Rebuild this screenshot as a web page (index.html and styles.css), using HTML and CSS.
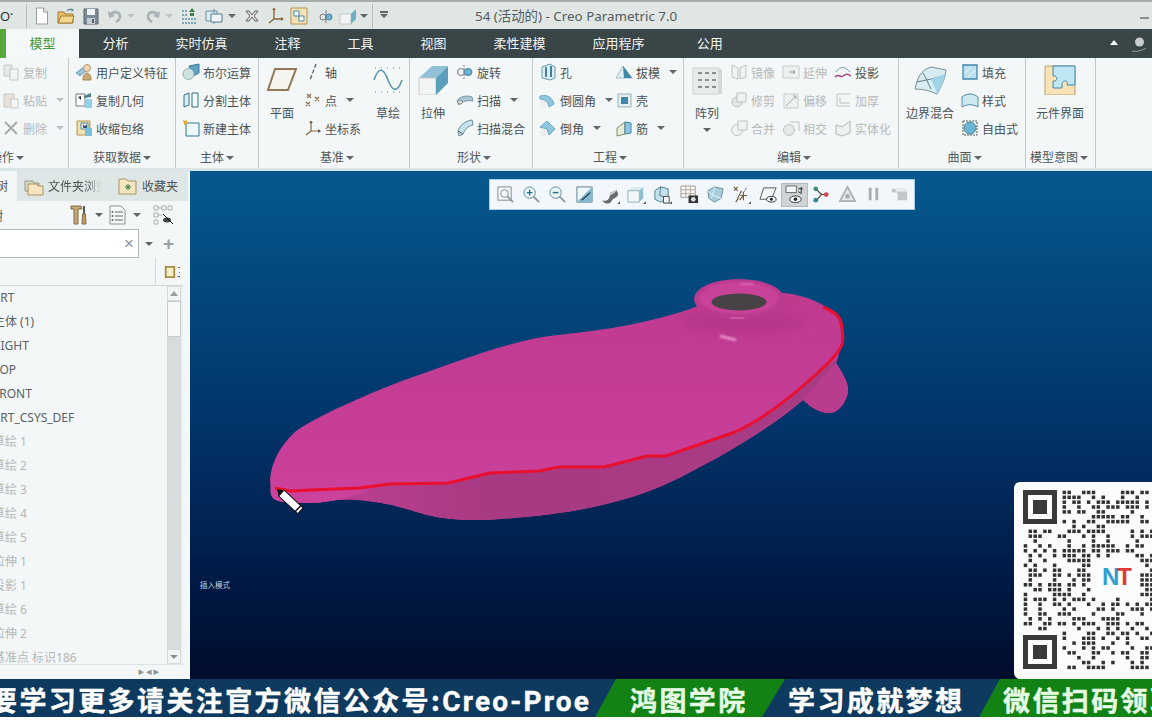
FILE: index.html
```html
<!DOCTYPE html>
<html lang="zh">
<head>
  <meta charset="UTF-8" />
  <title>54 (活动的) - Creo Parametric 7.0</title>
  <link rel="stylesheet" href="styles.css">
</head>
<body>
  <div class="page">

    <!-- quick access + title -->
    <header class="titlebar">
      <span class="logo">O<small>•</small></span>
      <span class="vsep"></span>
      <div class="quick">
        <svg class="q w14" viewBox="0 0 14 18"><path d="M1.5 1h7l4 4v12h-11z" fill="#fff" stroke="#9a9a9a"/><path d="M8.5 1v4h4" fill="#e8e8e8" stroke="#9a9a9a"/></svg>
        <svg class="q w18 m8" viewBox="0 0 18 18"><path d="M1 5h6l1 2h8v9H1z" fill="#e9bf6a" stroke="#a47a30"/><path d="M1 16l3-7h13l-2 7z" fill="#f4d88f" stroke="#a47a30"/><path d="M9 5c1-3 3-4 6-3l-1-1 3 2-3 2 1-2c-2 0-4 0-6 2z" fill="#5d7f94"/></svg>
        <svg class="q w16 m8" viewBox="0 0 16 18"><path d="M1 2h14v15H1z" fill="#7b8a96" stroke="#56626b"/><path d="M4 2h8v6H4z" fill="#eef2f4"/><path d="M4 11h8v6H4z" fill="#c6ced3"/><path d="M9 12h2v4H9z" fill="#56626b"/></svg>
        <svg class="q w16 m8" viewBox="0 0 16 18"><path d="M3 8c3-4 9-4 10 1 0 3-2 5-4 6" fill="none" stroke="#a9b2b5" stroke-width="2.6"/><path d="M1 4l1 7 6-2z" fill="#a9b2b5"/></svg>
        <i class="caret pale m4"></i>
        <svg class="q w16 m10" viewBox="0 0 16 18"><path d="M13 8C10 4 4 4 3 9c0 3 2 5 4 6" fill="none" stroke="#a9b2b5" stroke-width="2.6"/><path d="M15 4l-1 7-6-2z" fill="#a9b2b5"/></svg>
        <i class="caret pale m4"></i>
        <svg class="q w16 m8" viewBox="0 0 16 18"><path d="M1 4h6M1 8h5M1 12h14M1 16h14" stroke="#5b93ad" stroke-width="1.4" stroke-dasharray="2 1"/><path d="M8 5l3-4 3 4zM9 6h4v3H9z" fill="#3e7f4a"/></svg>
        <svg class="q w18 m8" viewBox="0 0 18 18"><path d="M1 4h11v10H1z" fill="#dcebf0" stroke="#6b8e9c"/><path d="M6 7h11v8H6z" fill="#eef6f8" stroke="#4e7c8e"/><path d="M9 2v4M9 15v2" stroke="#6b8e9c"/></svg>
        <i class="caret m5"></i>
        <svg class="q w14 m9" viewBox="0 0 14 18"><path d="M1 4h3l3 4 3-4h3l-4 5 4 5h-3l-3-4-3 4H1l4-5z" fill="#eee" stroke="#555"/></svg>
        <svg class="q w16 m9" viewBox="0 0 16 18"><path d="M6 1v11M6 12l-5 4M6 12h9" fill="none" stroke="#8a6a3a" stroke-width="1.4"/><path d="M13 10l3 2-3 2zM4 3l2-2 2 2z" fill="#8a6a3a"/></svg>
        <svg class="q w18 m6" viewBox="0 0 18 18"><path d="M1 1h16v16H1z" fill="#f4e2b8" stroke="#b49348"/><path d="M4 4h5v5H4zM9 9h5v5H9z" fill="#fff" stroke="#3f87a8"/></svg>
        <svg class="q w14 m11" viewBox="0 0 14 18"><circle cx="4" cy="10" r="3" fill="none" stroke="#777"/><circle cx="10" cy="10" r="3" fill="#6cb4d4" stroke="#3f87a8"/><path d="M7 3v13" stroke="#777"/></svg>
        <svg class="q w18 m6" viewBox="0 0 18 18"><path d="M1 7l6-5h10l-5 5z" fill="#dfeaec"/><path d="M1 7h11v10H1z" fill="#f2f5f5" stroke="#c0c8c8"/><path d="M12 7l5-5v10l-5 5z" fill="#6fb1c4"/></svg>
        <i class="caret m3"></i>
        <span class="vsep m4"></span>
        <i class="caret bar m7"></i>
      </div>
      <div class="title">54 (活动的) - Creo Parametric 7.0</div>
      <span class="minimize"></span>
    </header>

    <!-- ribbon tabs -->
    <nav class="tabs">
      <span class="tab active">模型</span>
      <span class="tab">分析</span>
      <span class="tab">实时仿真</span>
      <span class="tab">注释</span>
      <span class="tab">工具</span>
      <span class="tab">视图</span>
      <span class="tab">柔性建模</span>
      <span class="tab">应用程序</span>
      <span class="tab tab-last">公用</span>
      <span class="tab-tools">
        <i class="caret up"></i>
        <svg class="user" viewBox="0 0 16 18"><circle cx="8.500" cy="6" r="4.500" fill="#c8cccc"/><path d="M1 15c4 1 9 0 14-3" fill="none" stroke="#9aa0a0"/></svg>
      </span>
    </nav>

    <!-- ribbon -->
    <section class="ribbon">
      <div class="group g-ops">
        <div class="g-body">
          <div class="col">
            <div class="item dis"><svg viewBox="0 0 18 18"><path d="M2 2h8v11H2z" fill="#e6e9e9" stroke="#c4c8c8"/><path d="M8 6h8v11H8z" fill="#f4f5f5" stroke="#c4c8c8"/></svg>复制</div>
            <div class="item dis"><svg viewBox="0 0 18 18"><path d="M2 3h10v13H2z" fill="#e6e2d8" stroke="#c8c6c0"/><path d="M9 8h7v9H9z" fill="#f4f5f5" stroke="#c4c8c8"/></svg>粘贴<i class="caret pale"></i></div>
            <div class="item dis"><svg viewBox="0 0 18 18"><path d="M3 3l12 12M15 3L3 15" stroke="#a8acac" stroke-width="2.200"/></svg>删除<i class="caret pale"></i></div>
          </div>
        </div>
        <div class="g-label clip-left">操作<i class="caret"></i></div>
      </div>

      <div class="group g-get">
        <div class="g-body">
          <div class="col">
            <div class="item"><svg viewBox="0 0 18 18"><path d="M1 10l8-6 3 3-7 6z" fill="#9cc6d8" stroke="#6d9db3"/><circle cx="12" cy="5" r="3.500" fill="#f0d8b8" stroke="#b49a70"/><path d="M8 17c0-5 2-7 4-7s4 2 4 7z" fill="#cca873" stroke="#a58550"/></svg>用户定义特征</div>
            <div class="item"><svg viewBox="0 0 18 18"><path d="M1 3h9v12H1z" fill="#fff" stroke="#777"/><path d="M3 6l3 3V5z" fill="#333"/><path d="M9 5l7-3v4l-7 1z" fill="#4a7f93"/><path d="M10 8h7v9h-7z" fill="#8fd0ea"/></svg>复制几何</div>
            <div class="item"><svg viewBox="0 0 18 18"><path d="M2 2h13v14H2z" fill="#f2e0ae" stroke="#b39448"/><path d="M6 4h7v6H6z" fill="#fff" stroke="#3f87a8"/><path d="M10 9h7v8h-7z" fill="#77bfdc"/><path d="M8 5l2 2 2-2v4H8z" fill="#2f5d72"/></svg>收缩包络</div>
          </div>
        </div>
        <div class="g-label">获取数据<i class="caret"></i></div>
      </div>

      <div class="group g-body-grp">
        <div class="g-body">
          <div class="col">
            <div class="item"><svg viewBox="0 0 18 18"><path d="M7 3l10-2v9l-6 3z" fill="#5ea2bd" stroke="#3f7f98"/><circle cx="6.500" cy="11" r="5.500" fill="#cfe2e2" stroke="#8fb0b0"/></svg>布尔运算</div>
            <div class="item"><svg viewBox="0 0 18 18"><path d="M2 4l5-2v12l-5 2z" fill="#d6edf6" stroke="#386e85"/><path d="M10 2h6v14h-6z" fill="#eef8fb" stroke="#386e85"/></svg>分割主体</div>
            <div class="item"><svg viewBox="0 0 18 18"><path d="M4 4h13v13H4z" fill="#eef8fb" stroke="#2f7b99"/><path d="M1 1l2 1 2-1 0 2 1 2-2 0-2 1 0-2-1-2z" fill="#e6a92a"/></svg>新建主体</div>
          </div>
        </div>
        <div class="g-label">主体<i class="caret"></i></div>
      </div>

      <div class="group g-datum">
        <div class="g-body">
          <div class="big b30">
            <svg class="big-ic" viewBox="0 0 30 30"><path d="M8 4h21l-8 21H1z" fill="#f6f4ee" stroke="#93785a" stroke-width="2"/></svg>
            <span>平面</span>
          </div>
          <div class="col c-datum">
            <div class="item"><svg viewBox="0 0 18 18"><path d="M12 1L6 17" stroke="#555" stroke-dasharray="4 2" stroke-width="1.200"/></svg>轴</div>
            <div class="item"><svg viewBox="0 0 18 18"><path d="M3 3l4 4M7 3L3 7M11 6l4 4M15 6l-4 4M2 11l4 4M6 11l-4 4" stroke="#8d6a3f" stroke-width="1.200"/></svg>点<i class="caret"></i></div>
            <div class="item"><svg viewBox="0 0 18 18"><path d="M7 2v10M7 12l-5 4M7 12h9" fill="none" stroke="#8a6a3a" stroke-width="1.200"/><path d="M14 10l3 2-3 2zM5 4l2-2 2 2z" fill="#555"/></svg>坐标系</div>
          </div>
          <div class="big b36">
            <svg class="big-ic" viewBox="0 0 30 30"><path d="M1 15C6 0 11 4 15 15s9 14 14 0" fill="none" stroke="#5c97ad" stroke-width="1.600"/><path d="M2 3h27M2 27h27" stroke="#777" stroke-dasharray="1 5"/></svg>
            <span>草绘</span>
          </div>
        </div>
        <div class="g-label">基准<i class="caret"></i></div>
      </div>

      <div class="group g-shape">
        <div class="g-body">
          <div class="big b30">
            <svg class="big-ic" viewBox="0 0 30 30"><path d="M1 13L14 1h16L18 13z" fill="#8fc0d6"/><path d="M1 13h17v17H1z" fill="#f2f4f4" stroke="#c8cccc"/><path d="M18 13L30 1v17L18 30z" fill="#5b9ebb"/></svg>
            <span>拉伸</span>
          </div>
          <div class="col">
            <div class="item"><svg viewBox="0 0 18 18"><circle cx="5" cy="9" r="3.500" fill="none" stroke="#777"/><ellipse cx="12" cy="9" rx="4" ry="3.500" fill="#6cb4d4" stroke="#3f87a8"/><path d="M8 2v14" stroke="#888" stroke-dasharray="2 1"/></svg>旋转</div>
            <div class="item"><svg viewBox="0 0 18 18"><path d="M1 10c3-5 10-6 15-4l1 4c-5-1-11 0-14 4z" fill="#a9c6d2" stroke="#7a98a6"/><ellipse cx="4" cy="11" rx="2.500" ry="2" fill="#ddd" stroke="#888"/></svg>扫描<i class="caret"></i></div>
            <div class="item"><svg viewBox="0 0 18 18"><path d="M2 12C4 6 9 2 16 1l1 5c-5 1-8 4-10 9l-4 2z" fill="#c6e2ec" stroke="#6b8e9c"/><path d="M2 12l5 3" stroke="#555"/></svg>扫描混合</div>
          </div>
        </div>
        <div class="g-label">形状<i class="caret"></i></div>
      </div>

      <div class="group g-eng">
        <div class="g-body">
          <div class="col c-eng">
            <div class="item"><svg viewBox="0 0 18 18"><path d="M3 4l8-3 5 3v11l-5 2-8-2z" fill="#dceef4" stroke="#6b98aa"/><path d="M7 4v10M12 3v11" stroke="#42829c" stroke-width="2"/></svg>孔</div>
            <div class="item"><svg viewBox="0 0 18 18"><path d="M1 8h6v9H1z" fill="#eee"/><path d="M1 5c7-2 12 1 14 8l-5 3C9 11 6 8 1 8z" fill="#8cc7df" stroke="#6da8c0"/></svg>倒圆角<i class="caret"></i></div>
            <div class="item"><svg viewBox="0 0 18 18"><path d="M1 9h7v8H1z" fill="#eee"/><path d="M1 8l7-6 8 8-6 6-2-6z" fill="#8cc7df" stroke="#6da8c0"/></svg>倒角<i class="caret"></i></div>
          </div>
          <div class="col">
            <div class="item"><svg viewBox="0 0 18 18"><path d="M1 15L8 3l9 12z" fill="#e0edf1" stroke="#a9bcc4"/><path d="M8 3l9 12H9z" fill="#3f87a8"/></svg>拔模<i class="caret"></i></div>
            <div class="item"><svg viewBox="0 0 18 18"><path d="M3 3h13v13H3z" fill="#e6eef0" stroke="#9ab0b8"/><path d="M6 6h7v7H6z" fill="#3f87a8"/></svg>壳</div>
            <div class="item"><svg viewBox="0 0 18 18"><path d="M2 9l8-6v12l-8 2z" fill="#e4ecd8" stroke="#7d8f68"/><path d="M10 3l6 1v10l-6 1z" fill="#8cc7df" stroke="#3f87a8"/></svg>筋<i class="caret"></i></div>
          </div>
        </div>
        <div class="g-label">工程<i class="caret"></i></div>
      </div>

      <div class="group g-edit">
        <div class="g-body">
          <div class="big b30">
            <svg class="big-ic" viewBox="0 0 30 30"><path d="M1 3h26v26H1z" fill="#e8ebeb" stroke="#cdd2d2"/><path d="M27 3l3 2v24h-3z" fill="#d4d8d8"/><path d="M6 8h4M13 8h4M20 8h4M6 15h4M13 15h4M20 15h4M6 22h4M13 22h4M20 22h4" stroke="#8a9090" stroke-width="2"/></svg>
            <span class="pile">阵列<i class="caret"></i></span>
          </div>
          <div class="col c-edit">
            <div class="item dis"><svg viewBox="0 0 18 18"><path d="M2 2l6 3v11l-6-2zM16 2l-6 3v11l6-2z" fill="#f0f3f3" stroke="#bcc2c2"/></svg>镜像</div>
            <div class="item dis"><svg viewBox="0 0 18 18"><circle cx="7" cy="11" r="5" fill="#e2e6e6" stroke="#bcc2c2"/><path d="M7 2h9v9H7z" fill="#f0f3f3" stroke="#bcc2c2"/></svg>修剪</div>
            <div class="item dis"><svg viewBox="0 0 18 18"><circle cx="7" cy="11" r="5.500" fill="#f0f3f3" stroke="#bcc2c2"/><path d="M8 2h9v9H8z" fill="#f0f3f3" stroke="#bcc2c2"/></svg>合并</div>
          </div>
          <div class="col c-edit">
            <div class="item dis"><svg viewBox="0 0 18 18"><path d="M1 3h16v12H1z" fill="#eef1f1" stroke="#c8cccc"/><path d="M7 9h6M11 7l2 2-2 2" fill="none" stroke="#8a9090"/></svg>延伸</div>
            <div class="item dis"><svg viewBox="0 0 18 18"><path d="M2 3h14v14H2z" fill="#eef1f1" stroke="#c8cccc"/><path d="M4 15L14 5M11 5h3v3" fill="none" stroke="#a4aaaa"/></svg>偏移</div>
            <div class="item dis"><svg viewBox="0 0 18 18"><circle cx="7" cy="11" r="5.500" fill="#e6e9e9" stroke="#bcc2c2"/><path d="M8 3h9v9" fill="none" stroke="#bcc2c2"/></svg>相交</div>
          </div>
          <div class="col">
            <div class="item"><svg viewBox="0 0 18 18"><path d="M2 9c4-6 9-6 14 0" fill="none" stroke="#6ca5bd"/><path d="M1 14c3-4 5 1 8-1s4-3 8 0" fill="none" stroke="#a03a7a" stroke-width="1.400"/></svg>投影</div>
            <div class="item dis"><svg viewBox="0 0 18 18"><path d="M3 3h13M3 3v12h13M6 6v6h10" fill="none" stroke="#bcc2c2"/></svg>加厚</div>
            <div class="item dis"><svg viewBox="0 0 18 18"><path d="M2 6l6 2 8-6v12l-8 3-6-2z" fill="#eef1f1" stroke="#b0b6b6"/></svg>实体化</div>
          </div>
        </div>
        <div class="g-label">编辑<i class="caret"></i></div>
      </div>

      <div class="group g-surf">
        <div class="g-body">
          <div class="big b48">
            <svg class="big-ic" viewBox="0 0 36 30"><path d="M3 24C5 13 9 5 19 2l15 3c-1 9-5 17-9 24-6-3-14-5-22-5z" fill="#d8edf2" stroke="#7a9098"/><path d="M11 8c3 5 5 10 8 16M5 17c8-2 18-3 28-7" fill="none" stroke="#5e7c86"/><path d="M19 14l14-5c-1 7-4 14-8 19z" fill="#9fd4e6"/></svg>
            <span>边界混合</span>
          </div>
          <div class="col">
            <div class="item"><svg viewBox="0 0 18 18"><path d="M2 2h14v14H2z" fill="#bce0ef" stroke="#3f87a8" stroke-width="1.300"/><path d="M4 10l6-6M7 14l7-7" stroke="#fff"/></svg>填充</div>
            <div class="item"><svg viewBox="0 0 18 18"><path d="M1 16V6c5-4 11-4 16 0v10c-5-3-11-3-16 0z" fill="#cfe9f3" stroke="#4e8ca6"/></svg>样式</div>
            <div class="item"><svg viewBox="0 0 18 18"><path d="M2 2h14v14H2z" fill="none" stroke="#555" stroke-dasharray="2 1"/><circle cx="9" cy="9" r="6" fill="#6cb4d4" stroke="#3f87a8"/></svg>自由式</div>
          </div>
        </div>
        <div class="g-label">曲面<i class="caret"></i></div>
      </div>

      <div class="group g-intent">
        <div class="g-body">
          <div class="big b48">
            <svg class="big-ic" viewBox="0 0 32 30"><path d="M1 1h30v29H1z" fill="#f8e2b6" stroke="#b9a273"/><path d="M9 1h22v19h-8c2-5-5-6-5 0v3H9v-7c5 1 5-6 0-5z" fill="#bfe6f3" stroke="#3f87a8"/></svg>
            <span>元件界面</span>
          </div>
        </div>
        <div class="g-label">模型意图<i class="caret"></i></div>
      </div>
    </section>

    <main class="workspace">
      <!-- model tree, cut by the left edge of the capture -->
      <aside class="sidebar">
        <div class="side-tabs">
          <span class="side-tab on">树</span>
          <span class="side-tab t-files">
            <svg viewBox="0 0 20 20"><path d="M1 5h8l1 2h5v8H1z" fill="#d6d8ce" stroke="#9a9a88"/><path d="M4 8h9l1 2h5v9H4z" fill="#f5e4bd" stroke="#a89360"/></svg><span class="fade">文件夹浏览</span>
          </span>
          <span class="side-tab t-fav">
            <svg viewBox="0 0 20 20"><path d="M1 3h7l2 2h8v13H1z" fill="#f6e6c0" stroke="#a89360"/><path d="M7 11h6M10 8v6M8 9l4 4M12 9l-4 4" stroke="#3f7f4a"/></svg>收藏夹
          </span>
        </div>
        <div class="side-tools">
          <span class="clip-name">树</span>
          <svg class="st-hammer" viewBox="0 0 18 20"><path d="M1 1h10l1 3H8v15H4V4H1z" fill="#c9a873" stroke="#7f6a48"/><path d="M14 1v8" stroke="#555" stroke-width="2"/><path d="M12.500 9h3l.5 10h-4z" fill="#c79a5c" stroke="#7f6a48"/></svg>
          <i class="caret"></i>
          <svg class="st-list" viewBox="0 0 17 20"><path d="M1 1h11l4 4v14H1z" fill="#f6f8f8" stroke="#8a9292"/><path d="M6 7h8M6 11h8M6 15h8" stroke="#5a6868"/><circle cx="3.500" cy="7" r="1" fill="#5a6868"/><circle cx="3.500" cy="11" r="1" fill="#5a6868"/><circle cx="3.500" cy="15" r="1" fill="#5a6868"/></svg>
          <i class="caret"></i>
          <svg class="st-eye" viewBox="0 0 20 20"><path d="M1 1h4v4H1zM1 8h4v4H1zM1 15h4v4H1zM5 3h4M5 10h4M9 1h4v4H9zM15 1h4v4h-4z" fill="#f6f8f8" stroke="#a9b0b0"/><ellipse cx="14" cy="15" rx="4" ry="2.500" fill="#444"/><path d="M10 9l10 10" stroke="#111"/></svg>
        </div>
        <div class="side-search">
          <div class="search-box"><span class="x">×</span></div>
          <i class="caret"></i>
          <span class="plus">+</span>
        </div>
        <div class="side-head">
          <span class="head-sep"></span>
          <svg viewBox="0 0 14 16"><path d="M2 2h10v12H2z" fill="#f6edc9" stroke="#a08a40" stroke-width="2"/></svg>
          <span class="head-more">三</span>
        </div>
        <div class="side-list">
          <ul class="tree">
            <li>PRT</li>
            <li>主体 (1)</li>
            <li>RIGHT</li>
            <li>TOP</li>
            <li>FRONT</li>
            <li>PRT_CSYS_DEF</li>
            <li class="off">草绘 1</li>
            <li class="off">草绘 2</li>
            <li class="off">草绘 3</li>
            <li class="off">草绘 4</li>
            <li class="off">草绘 5</li>
            <li class="off">拉伸 1</li>
            <li class="off">投影 1</li>
            <li class="off">草绘 6</li>
            <li class="off">拉伸 2</li>
            <li class="off">基准点 标识186</li>
          </ul>
          <div class="scrollbar">
            <span class="sb-btn"><i class="caret up"></i></span>
            <span class="sb-thumb"></span>
            <span class="sb-track"></span>
            <span class="sb-btn"><i class="caret"></i></span>
          </div>
        </div>
        <div class="side-foot"><span>▸</span><span>◂</span><span>▸</span></div>
      </aside>

      <div class="viewport">
        <svg class="scene" viewBox="190 171 962 508">
          <defs>
            <linearGradient id="bodyFill" x1="0" y1="0" x2="0" y2="1">
              <stop offset="0" stop-color="#bd3a8e"/>
              <stop offset=".7" stop-color="#c83e98"/>
              <stop offset="1" stop-color="#cf449c"/>
            </linearGradient>
            <linearGradient id="underFill" x1="0" y1="0" x2="1" y2="0">
              <stop offset="0" stop-color="#c6409a"/>
              <stop offset=".35" stop-color="#a83a82"/>
              <stop offset="1" stop-color="#a83c84"/>
            </linearGradient>
            <filter id="soft" x="-30%" y="-30%" width="160%" height="160%"><feGaussianBlur stdDeviation="4"/></filter>
            <filter id="softer" x="-30%" y="-60%" width="160%" height="220%"><feGaussianBlur stdDeviation="1"/></filter>
            <clipPath id="bodyClip"><path d="M270 480 C271 462 281 445 294 433 S370 392 413 377 S510 340 558 335 S650 323 693 308 C710 300 765 295 784 293 C805 295 830 305 838 318 C843 330 843 345 836 363 C842 372 848 382 848 390 S840 413 830 413 S812 408 803 400 C770 428 730 452 681 477 S575 514 500 519 S420 508 375 502 S340 503 302 503 S272 495 270 480 Z"/></clipPath>
          </defs>
          <g clip-path="url(#bodyClip)">
            <rect x="260" y="270" width="600" height="260" fill="url(#bodyFill)"/>
            <path d="M270 492 L291 491 L310 490 L359 488 L390 484 L448 483 L490 473 L539 471 L559 467 L604 467 L647 456 L666 456 L735 432 C770 416 805 385 826 365 L880 340 L880 530 L270 530 Z" fill="url(#underFill)"/>
            <path d="M803 400 C815 386 826 374 836 363 L850 365 L850 420 L805 420 Z" fill="#b83d8e"/>
            <path d="M270 490 L370 490 L310 510 L270 505 Z" fill="#cb429c" filter="url(#softer)"/>
            <ellipse cx="742" cy="322" rx="62" ry="13" fill="#b23688" opacity=".6" filter="url(#soft)"/>
          </g>
          <ellipse cx="739" cy="299" rx="45" ry="20" fill="#b93a8e"/>
          <ellipse cx="739" cy="298" rx="40" ry="16" fill="#c9439a" filter="url(#softer)"/>
          <ellipse cx="739" cy="302" rx="27.500" ry="8.500" fill="#474245"/>
          <path d="M730 317.500 Q736 319 744 317.500" stroke="#ea7fc2" stroke-width="1.500" fill="none" filter="url(#softer)"/>
          <path d="M720 336 Q728 338 736 340" stroke="#ee9ad0" stroke-width="2.500" fill="none" filter="url(#softer)"/>
          <path d="M740 284 Q747 283 754 285" stroke="#de6cb4" stroke-width="1.500" fill="none" filter="url(#softer)"/>
          <path d="M275 488 L291 491 L310 490 L359 488 L390 484 L448 483 L490 473 L539 471 L559 467 L604 467 L647 456 L666 456 L735 432 C770 416 805 385 826 365 S843 340 842 328 S835 312 823 307" fill="none" stroke="#ea0f2e" stroke-width="3" stroke-linejoin="round"/>
          <g transform="translate(277 489) rotate(43)">
            <path d="M0 0 L6 -4 L6 4 Z" fill="#111"/>
            <rect x="6" y="-4" width="26" height="8" fill="#fff" stroke="#111"/>
            <rect x="28" y="-4" width="1.500" height="8" fill="#111"/>
          </g>
        </svg>
        <div class="view-bar">
          <span class="vb"><svg viewBox="0 0 20 20"><path d="M2 2h14v14H2z" fill="#f4f7f8" stroke="#7d8c92"/><circle cx="9" cy="9" r="4" fill="none" stroke="#7d8c92"/><path d="M12 12l6 6" stroke="#8a9a9f" stroke-width="2"/></svg></span>
          <span class="vb"><svg viewBox="0 0 20 20"><circle cx="8" cy="8" r="6" fill="#eaf5f8" stroke="#5e8a99"/><path d="M5 8h6M8 5v6" stroke="#2b6f88" stroke-width="1.500"/><path d="M12 12l6 6" stroke="#8a9a9f" stroke-width="2"/></svg></span>
          <span class="vb"><svg viewBox="0 0 20 20"><circle cx="8" cy="8" r="6" fill="#eaf5f8" stroke="#5e8a99"/><path d="M5 8h6" stroke="#2b6f88" stroke-width="1.500"/><path d="M12 12l6 6" stroke="#8a9a9f" stroke-width="2"/></svg></span>
          <span class="vb"><svg viewBox="0 0 20 20"><path d="M2 2h16v16H2z" fill="#eef6f9" stroke="#5d7f8c"/><path d="M2 18L18 2v16z" fill="#83bad0"/><path d="M7 16l9-8" stroke="#22333a" stroke-width="1.200"/></svg></span>
          <span class="vb"><svg viewBox="0 0 20 20"><path d="M1 16c4 2 8-1 8-4s6-2 7-7l2 4c0 5-5 4-7 8s-7 3-10-1z" fill="#6b6b6b"/><path d="M9 8c2-1 4-1 7-3-1 3-4 4-6 6z" fill="#c9c9c9"/><path d="M20 17v3h-3z" fill="#555"/></svg></span>
          <span class="vb"><svg viewBox="0 0 20 20"><path d="M1 6l4-4h12l-4 4z" fill="#dcebf0"/><path d="M1 6h12v12H1z" fill="#f4f7f8" stroke="#8fb0bc"/><path d="M13 6l4-4v12l-4 4z" fill="#8fbfd2"/><path d="M20 17v3h-3z" fill="#555"/></svg></span>
          <span class="vb"><svg viewBox="0 0 20 20"><path d="M2 6l6-4 8 2v10l-8 4-6-3z" fill="#c6e2ec" stroke="#4e7c8e"/><path d="M8 2l-1 9 9 3" fill="none" stroke="#4e7c8e"/><path d="M11 12h6v7h-6z" fill="#f4f7f8" stroke="#444"/><path d="M20 17v3h-3z" fill="#555"/></svg></span>
          <span class="vb"><svg viewBox="0 0 20 20"><path d="M1 1h15v12H1z" fill="#f4f7f8" stroke="#a89a88"/><path d="M1 5h15M1 9h15M6 1v12M11 1v12" stroke="#b8a898"/><path d="M9 11h10v8H9z" fill="#333"/><circle cx="14" cy="15" r="2.500" fill="#ddd"/></svg></span>
          <span class="vb"><svg viewBox="0 0 20 20"><path d="M2 6l7-4 9 2-2 10-7 4-6-4z" fill="#a9cdd8" stroke="#6d919e"/><path d="M9 2L7 11l9 3M2 6l5 5-2 3" fill="none" stroke="#e6f3f6"/></svg></span>
          <span class="vb"><svg viewBox="0 0 20 20"><path d="M2 2l4 4M6 2L2 6M6 14l4-8M4 18l3-5M9 11h7M12 7v9M12 11l-4 5" stroke="#6e5a3e" stroke-width="1.200" fill="none"/><path d="M15 3l-2 4" stroke="#555" stroke-dasharray="2 1"/><path d="M20 17v3h-3z" fill="#555"/></svg></span>
          <span class="vb"><svg viewBox="0 0 20 20"><path d="M5 3h13l-5 12H1z" fill="#f4f7f8" stroke="#555"/><ellipse cx="13" cy="15" rx="5" ry="3" fill="#f4f7f8" stroke="#333"/><circle cx="13" cy="15" r="1.500" fill="#222"/></svg></span>
          <span class="vb vb-on"><svg viewBox="0 0 20 20"><path d="M1 1h11v7H1z" fill="#f4f7f8" stroke="#666"/><path d="M14 4h5M17 2v7l-3-2" fill="none" stroke="#333"/><ellipse cx="11" cy="15" rx="6" ry="3.500" fill="#f4f7f8" stroke="#333"/><circle cx="11" cy="15" r="1.800" fill="#222"/></svg></span>
          <span class="vb"><svg viewBox="0 0 20 20"><path d="M6 5l5 5-5 6M11 10h6" fill="none" stroke="#444" stroke-width="1.200"/><circle cx="5" cy="4" r="2.500" fill="#3f8f6a"/><circle cx="16" cy="10" r="2.500" fill="#d0484c"/><circle cx="5" cy="16" r="2.500" fill="#3f7f9a"/></svg></span>
          <span class="vb"><svg viewBox="0 0 20 20"><path d="M10 2l8 15H2z" fill="#e6e9e9" stroke="#a8aeae" stroke-width="1.800"/><circle cx="10" cy="12" r="2.500" fill="#a8aeae"/></svg></span>
          <span class="vb"><svg viewBox="0 0 20 20"><path d="M5 3h3v13H5zM12 3h3v13h-3z" fill="#a8aeae"/></svg></span>
          <span class="vb"><svg viewBox="0 0 20 20"><path d="M2 4h16v12H8V8H2z" fill="#c2c8c8"/><path d="M6 4h12v3H6z" fill="#e6e9e9"/></svg></span>
        </div>
        <div class="mode-note">插入模式</div>
      </div>
    </main>

    <footer class="banner">
      <div class="seg seg-a"><span class="lead">要学习更多请关注官方微信公众号:<span class="latin">Creo-Proe</span></span></div>
      <div class="seg seg-green seg-b">鸿图学院</div>
      <div class="seg seg-c">学习成就梦想</div>
      <div class="seg seg-green seg-d">微信扫码领取</div>
    </footer>

    <!-- qr sits over the viewport -->
    <div class="qr">
      <svg id="qrCode" viewBox="0 0 138 197"></svg>
      <span class="qr-logo"><b class="n">N</b><b class="t">T</b></span>
    </div>
  </div>
  <script src="qr.js"></script>
</body>
</html>
```

FILE: styles.css
```css
* {
  box-sizing: border-box;
}

html, body {
  margin: 0;
  height: 100%;
  overflow: hidden;
  background: #fff;
}

body {
  font-family: "Noto Sans CJK SC", "Noto Sans", sans-serif;
  font-size: 12px;
  color: #4a5254;
}

svg {
  display: block;
  flex: none;
}

.page {
  position: relative;
  width: 1152px;
  height: 720px;
  display: flex;
  flex-direction: column;
  overflow: hidden;
}

/* small triangles used everywhere */
.caret {
  display: inline-block;
  flex: none;
  width: 0;
  height: 0;
  border-left: 4px solid transparent;
  border-right: 4px solid transparent;
  border-top: 4px solid #5e6668;
}
.caret.pale { border-top-color: #bcc2c2; }
.caret.up {
  border-top: 0;
  border-bottom: 5px solid #fff;
}
.caret.bar { position: relative; }
.caret.bar::before {
  content: "";
  position: absolute;
  left: -4px;
  top: -7px;
  width: 8px;
  height: 2px;
  background: #5e6668;
}

/* title bar */
.titlebar {
  flex: none;
  height: 29px;
  display: flex;
  align-items: center;
  background: #dfe6e3;
  border-top: 2px solid #a5adab;
  position: relative;
}
.logo {
  width: 26px;
  font: 13px "Noto Sans", sans-serif;
  color: #333;
}
.logo small { font-size: 7px; vertical-align: 4px; }
.vsep {
  width: 1px;
  height: 24px;
  background: #b6bebc;
  flex: none;
}
.quick {
  display: flex;
  align-items: center;
  padding-left: 8px;
}
.w14 { width: 14px; height: 18px; }
.w16 { width: 16px; height: 18px; }
.w18 { width: 18px; height: 18px; }
.m3 { margin-left: 3px; }
.m4 { margin-left: 4px; }
.m5 { margin-left: 5px; }
.m6 { margin-left: 6px; }
.m7 { margin-left: 7px; }
.m8 { margin-left: 8px; }
.m9 { margin-left: 9px; }
.m10 { margin-left: 10px; }
.m11 { margin-left: 11px; }
.title {
  margin-left: 87px;
  margin-top: -2px;
  font: 13.4px "Noto Sans", "Noto Sans CJK SC", sans-serif;
  color: #545c5e;
  white-space: nowrap;
}
.minimize {
  position: absolute;
  right: 3px;
  top: 15px;
  width: 9px;
  height: 2px;
  background: #8a9290;
}

/* tabs */
.tabs {
  flex: none;
  height: 29px;
  display: flex;
  align-items: stretch;
  background: #3a4547;
  border-left: 6px solid #58a93c;
}
.tab {
  padding: 0 23.5px;
  font-size: 13px;
  line-height: 28px;
  color: #f2f4f4;
}
.tab.active {
  background: #f5f8f8;
  color: #3f9a3c;
}
.tab-last { margin-left: 5px; }
.tab-tools {
  margin-left: auto;
  display: flex;
  align-items: center;
  gap: 13px;
  padding: 0 5px 3px 0;
}
.user { width: 16px; height: 18px; margin-top: 6px; }

/* ribbon */
.ribbon {
  flex: none;
  height: 113px;
  display: flex;
  background: #f4f7f8;
  border-bottom: 3px solid #dbe4e7;
}
.group {
  position: relative;
  display: flex;
  flex-direction: column;
  flex: none;
  border-right: 1px solid #c2c8c8;
}
.g-body {
  display: flex;
  height: 84px;
}
.col {
  display: flex;
  flex-direction: column;
}
.item {
  height: 28px;
  display: flex;
  align-items: center;
  gap: 3px;
  white-space: nowrap;
  color: #4a5254;
}
.item svg { width: 18px; height: 18px; }
.item .caret { margin-left: 6px; }
.item.dis { color: #b4b9b9; }
.big {
  display: flex;
  flex-direction: column;
  align-items: center;
  padding-top: 7px;
  flex: none;
}
.big-ic { height: 30px; width: 30px; margin-bottom: 10px; }
.big span { line-height: 16px; white-space: nowrap; }
.pile { display: flex; flex-direction: column; align-items: center; gap: 7px; }
.b30 { width: 30px; }
.b36 { width: 36px; }
.b48 { width: 48px; }
.g-label {
  height: 26px;
  padding-top: 7px;
  line-height: 16px;
  text-align: center;
  white-space: nowrap;
  color: #4f5759;
  margin-right: 6px;
}
.g-label .caret { margin-left: 2px; vertical-align: 2px; }
.clip-left { text-align: left; margin-left: -12px; }

.g-ops { width: 69px; padding-left: 2px; overflow: hidden; }
.g-get { width: 107px; padding-left: 6px; }
.g-body-grp { width: 83px; padding-left: 6px; }
.g-datum { width: 151px; padding-left: 8px; }
.g-datum .g-body { gap: 7px; }
.c-datum { width: 59px; }
.g-shape { width: 123px; padding-left: 8px; }
.g-shape .g-body { gap: 8px; }
.g-eng { width: 151px; padding-left: 6px; }
.c-eng { width: 76px; }
.g-edit { width: 215px; padding-left: 8px; }
.g-edit .g-body { gap: 8px; }
.c-edit { width: 44px; }
.g-surf { width: 127px; padding-left: 7px; }
.g-surf .g-body { gap: 7px; }
.g-intent { width: 70px; padding-left: 10px; }
.g-surf .big-ic { width: 36px; }
.g-intent .big-ic { width: 32px; }
.g-datum .g-label,
.g-shape .g-label,
.g-eng .g-label,
.g-edit .g-label,
.g-surf .g-label { margin-right: 2px; }
.g-intent .g-label { margin: 0 0 0 -6px; text-align: left; }

/* work area */
.workspace {
  flex: none;
  height: 508px;
  display: flex;
}
.sidebar {
  flex: none;
  width: 190px;
  display: flex;
  flex-direction: column;
  background: #f4f7f8;
  overflow: hidden;
}
.side-tabs {
  height: 30px;
  display: flex;
  flex: none;
  background: #dfe6e6;
  margin-right: 2px;
}
.side-tab {
  display: flex;
  align-items: center;
  gap: 4px;
  line-height: 30px;
  white-space: nowrap;
}
.side-tab svg { width: 20px; height: 20px; }
.side-tab.on {
  width: 17px;
  background: #f4f7f8;
  justify-content: flex-end;
  padding-right: 9px;
  overflow: hidden;
}
.t-files { width: 93px; padding-left: 7px; }
.t-fav { padding-left: 8px; }
.fade {
  width: 54px;
  overflow: hidden;
  -webkit-mask-image: linear-gradient(90deg, #000 70%, transparent);
  mask-image: linear-gradient(90deg, #000 70%, transparent);
}
.side-tools {
  height: 28px;
  flex: none;
  display: flex;
  align-items: center;
}
.clip-name {
  width: 70px;
  margin-left: -9px;
  margin-right: 9px;
}
.st-hammer { width: 18px; height: 20px; }
.side-tools .caret { margin-left: 7px; }
.st-list { width: 17px; height: 20px; margin-left: 6px; }
.st-eye { width: 20px; height: 20px; margin-left: 12px; }
.side-search {
  height: 29px;
  flex: none;
  display: flex;
  align-items: center;
}
.search-box {
  width: 139px;
  height: 29px;
  background: #fff;
  border: 1px solid #b6bcbc;
  border-left: 0;
  display: flex;
  align-items: center;
  justify-content: flex-end;
  padding-right: 4px;
}
.search-box .x {
  font: 17px "Liberation Sans", sans-serif;
  color: #8c9292;
}
.side-search .caret { margin-left: 6px; }
.plus {
  margin-left: 10px;
  font: bold 19px/1 "Liberation Sans", sans-serif;
  color: #9aa0a0;
}
.side-head {
  height: 28px;
  flex: none;
  display: flex;
  align-items: center;
  border-bottom: 1px solid #cfd4d4;
  padding-left: 155px;
  position: relative;
  margin-right: 7px;
}
.head-sep {
  position: absolute;
  left: 155px;
  top: 0;
  bottom: 0;
  width: 1px;
  background: #d4d9d9;
}
.side-head svg { width: 12px; height: 16px; margin-left: 9px; }
.head-more { width: 3px; overflow: hidden; margin-left: 1px; }
.side-list {
  flex: 1;
  min-height: 0;
  display: flex;
  margin-right: 7px;
}
.tree {
  flex: 1;
  min-width: 0;
  list-style: none;
  margin: 0;
  padding: 0;
  overflow: hidden;
  font-family: "Noto Sans", "Noto Sans CJK SC", sans-serif;
}
.tree li {
  height: 24px;
  line-height: 24px;
  margin-left: -7px;
  white-space: nowrap;
  color: #5a6264;
}
.tree li.off { color: #b2b7b7; }
.scrollbar {
  width: 16px;
  display: flex;
  flex-direction: column;
  background: #d8dcdc;
  border-right: 2px solid #eef1f2;
}
.sb-btn {
  height: 15px;
  flex: none;
  display: flex;
  align-items: center;
  justify-content: center;
  background: #f2f5f5;
  border: 1px solid #d6dada;
}
.sb-btn .caret.up { border-bottom-color: #9aa0a0; }
.sb-btn .caret { border-top-color: #8a9090; }
.sb-thumb {
  height: 36px;
  flex: none;
  background: #f6f8f8;
  border: 1px solid #c8cccc;
}
.sb-track { flex: 1; }
.side-foot {
  height: 15px;
  flex: none;
  display: flex;
  gap: 2px;
  justify-content: flex-end;
  padding-right: 24px;
  margin-right: 7px;
  border-top: 1px solid #dfe3e3;
  font: 11px/14px "DejaVu Sans", sans-serif;
  color: #8f9595;
}

/* graphics window */
.viewport {
  position: relative;
  flex: 1;
  background: linear-gradient(180deg, #06598f 0%, #024a80 20%, #02346a 50%, #001c48 78%, #000c2c 100%);
  overflow: hidden;
}
.scene {
  width: 962px;
  height: 508px;
}
.view-bar {
  position: absolute;
  left: 299px;
  top: 8px;
  width: 426px;
  height: 31px;
  display: flex;
  align-items: center;
  padding-left: 2px;
  background: #f2f7fb;
  border: 1px solid #a9cde4;
}
.vb {
  width: 26.300px;
  height: 24px;
  display: flex;
  align-items: center;
  justify-content: center;
  flex: none;
}
.vb svg { width: 19px; height: 19px; }
.vb-on {
  background: #cfd3d5;
  border: 1px solid #b6babc;
}
.mode-note {
  position: absolute;
  left: 10px;
  top: 409px;
  font-size: 7.500px;
  line-height: 10px;
  color: #c8d2de;
}

/* promo strip burned into the video */
.banner {
  flex: none;
  height: 38px;
  display: flex;
  background: #0d3a5e;
  overflow: hidden;
  font-size: 27px;
  font-weight: 700;
  letter-spacing: 2.4px;
  line-height: 41px;
  color: #fff;
  white-space: nowrap;
  -webkit-text-stroke: .4px #fff;
}
.seg { flex: none; }
.seg-a { width: 595px; }
.lead { margin-left: -10px; }
.latin {
  font-family: "Roboto", sans-serif;
  font-size: 28px;
  letter-spacing: 2.2px;
}
.seg-green {
  background: #128214;
  color: #e6fbe4;
  -webkit-text-stroke-color: #e6fbe4;
  clip-path: polygon(21px 0, 100% 0, calc(100% - 23px) 100%, 0 100%);
}
.seg-b { width: 190px; padding-left: 35px; }
.seg-c { width: 194px; padding-left: 3px; }
.seg-d { flex: 1; padding-left: 24px; }

/* qr code */
.qr {
  position: absolute;
  left: 1014px;
  top: 482px;
  width: 138px;
  height: 197px;
  background: #fbfcfc;
  border-radius: 6px 0 0 6px;
}
.qr svg { width: 138px; height: 197px; filter: blur(.4px); }
.qr-logo {
  position: absolute;
  left: 88px;
  top: 83px;
  font: 700 24px/24px "Liberation Sans", sans-serif;
  letter-spacing: -2px;
}
.qr-logo .n { color: #2f9fd0; font-weight: 700; }
.qr-logo .t { color: #dd3b33; font-weight: 700; }
```

FILE: qr.js
```js
// fake qr matrix, same pattern every load
const qrSvg = document.getElementById('qrCode');
const SIZE = 4.86;
const NS = 'http://www.w3.org/2000/svg';
let seed = 54321;

function nextBit() {
  seed = (seed * 1103515245 + 12345) & 0x7fffffff;
  return (seed >> 16) % 100 < 47;
}

function addRect(x, y, w, h, fill) {
  const r = document.createElementNS(NS, 'rect');
  r.setAttribute('x', x);
  r.setAttribute('y', y);
  r.setAttribute('width', w);
  r.setAttribute('height', h);
  r.setAttribute('fill', fill);
  qrSvg.appendChild(r);
}

function finder(x, y) {
  addRect(x, y, 34, 34, '#3a3a3a');
  addRect(x + 5, y + 5, 24, 24, '#fbfcfc');
  addRect(x + 10, y + 10, 14, 14, '#3a3a3a');
}

const left = 9;
const top_ = 8;

for (let row = 0; row < 37; row++) {
  for (let col = 0; col < 27; col++) {
    const bit = nextBit();
    const inTop = col < 8 && row < 8;
    const inBottom = col < 8 && row > 28;
    const inLogo = col > 13 && col < 24 && row > 13 && row < 22;
    if (!bit || inTop || inBottom || inLogo) continue;
    addRect(left + col * SIZE + 0.7, top_ + row * SIZE + 0.7, 3.5, 3.5, '#333');
  }
}

finder(left, top_);
finder(left, top_ + 145);
```
